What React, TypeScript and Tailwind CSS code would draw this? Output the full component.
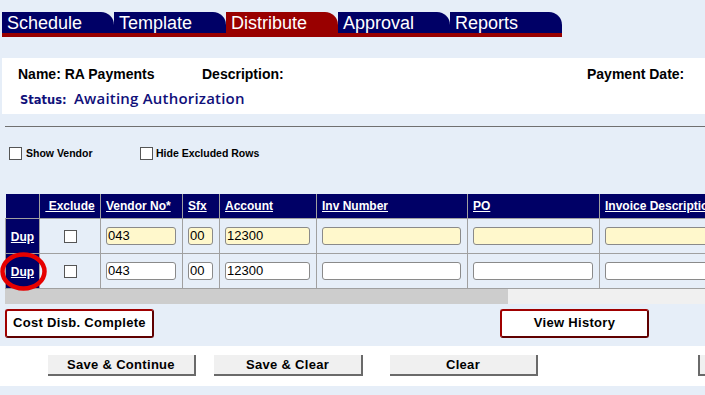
import React from "react";

const tabs = ["Schedule", "Template", "Distribute", "Approval", "Reports"];

const columns = [
  { label: "", w: 34 },
  { label: "\u00a0Exclude", w: 61, center: true },
  { label: "Vendor No*", w: 82 },
  { label: "Sfx", w: 37 },
  { label: "Account", w: 97 },
  { label: "Inv Number", w: 151 },
  { label: "PO", w: 132 },
  { label: "Invoice Description", w: 180 },
  { label: "Amount", w: 100 },
];

const inputWidths = [70, 25, 85, 139, 120, 168, 88];

function Checkbox() {
  return <span className="inline-block w-[13px] h-[13px] border border-[#555] bg-white shrink-0" />;
}

function Row({ yellow }: { yellow: boolean }) {
  const values = ["043", "00", "12300", "", "", "", ""];
  return (
    <tr>
      <td className="h-[35px] bg-[#000066] border border-[#a0a0a0] text-center align-middle">
        <a className="text-white font-bold underline text-[12px]">Dup</a>
      </td>
      <td className="border border-[#a0a0a0] text-center align-middle">
        <span className="inline-flex align-middle">
          <Checkbox />
        </span>
      </td>
      {values.map((v, i) => (
        <td key={i} className="border border-[#a0a0a0] pl-[5px] align-middle">
          <input
            readOnly
            value={v}
            style={{ width: inputWidths[i] }}
            className={`block h-[18px] rounded-[3px] border border-[#8a8a8a] px-[1px] text-[13px] text-black font-['Liberation_Sans',sans-serif] outline-none ${
              yellow ? "bg-[#fff8cc]" : "bg-white"
            }`}
          />
        </td>
      ))}
    </tr>
  );
}

export default function App() {
  return (
    <div className="w-[705px] h-[395px] overflow-hidden bg-[#e6eef8] font-['Liberation_Sans',Arial,sans-serif] text-black">
      {/* Tabs */}
      <div className="pt-[12px] pl-[2px]">
        <div className="flex">
          {tabs.map((t) => (
            <div
              key={t}
              className={`w-[112px] h-[21px] rounded-tr-[13px] pl-[5px] text-[18px] leading-[22px] text-white ${
                t === "Distribute" ? "bg-[#990000]" : "bg-[#000066]"
              }`}
            >
              {t}
            </div>
          ))}
        </div>
        <div className="w-[560px] h-[4px] bg-[#990000]" />
      </div>

      {/* Header */}
      <div className="ml-[2px] mt-[21px] h-[56px] bg-white pt-[8px] pl-[16px]">
        <div className="flex text-[14px] leading-[16px] font-bold">
          <span className="w-[184px]">Name: RA Payments</span>
          <span className="w-[385px]">Description:</span>
          <span>Payment Date:</span>
        </div>
        <div className="mt-[6px] flex items-baseline pl-[2px] text-[#10107a] leading-[20px]">
          <span className="w-[54px] text-[11.5px] font-bold font-['DejaVu_Sans',Verdana,sans-serif]">Status:</span>
          <span className="text-[15px] font-semibold font-['Open_Sans',sans-serif] tracking-[0.2px]">Awaiting Authorization</span>
        </div>
      </div>

      <div className="ml-[5px] mt-[12px] h-px bg-[#707070]" />

      {/* Options */}
      <div className="mt-[20px] flex items-center pl-[9px] text-[10.5px] font-bold h-[13px]">
        <Checkbox />
        <span className="ml-[4px] w-[114px]">Show Vendor</span>
        <Checkbox />
        <span className="ml-[3px]">Hide Excluded Rows</span>
      </div>

      {/* Grid */}
      <div className="relative ml-[5px] mt-[34px]">
        <div className="w-[700px] overflow-hidden">
          <table className="table-fixed border-collapse w-[874px]">
            <colgroup>
              {columns.map((c, i) => (
                <col key={i} style={{ width: c.w }} />
              ))}
            </colgroup>
            <thead>
              <tr className="bg-[#000066] h-[24px]">
                {columns.map((c, i) => (
                  <th
                    key={i}
                    className={`border-x border-b border-[#a0a0a0] first:border-l-0 text-white text-[12px] font-bold underline whitespace-nowrap overflow-hidden ${
                      c.center ? "text-center" : "text-left pl-[5px]"
                    }`}
                  >
                    {c.label}
                  </th>
                ))}
              </tr>
            </thead>
            <tbody>
              <Row yellow />
              <Row yellow={false} />
            </tbody>
          </table>
          <div className="h-[15px] bg-[#f0f0f0]">
            <div className="w-[503px] h-full bg-[#cdcdcd]" />
          </div>
        </div>
        {/* red annotation ring */}
        <svg className="absolute left-[-5px] top-[58px]" width="47" height="39" viewBox="0 0 47 39">
          <ellipse cx="23.5" cy="19.5" rx="21" ry="17" fill="none" stroke="#e60000" strokeWidth="4.5" />
        </svg>
      </div>

      {/* Action buttons */}
      <div className="mt-[5px] flex pl-[5px] text-[13px] font-bold tracking-[0.3px]">
        <button className="shrink-0 w-[149px] h-[29px] rounded-[3px] border-2 border-[#a00000] border-r-[#600000] border-b-[#600000] bg-white">
          Cost Disb. Complete
        </button>
        <button className="shrink-0 ml-[346px] w-[149px] h-[29px] rounded-[3px] border-2 border-[#a00000] border-r-[#600000] border-b-[#600000] bg-white">
          View History
        </button>
      </div>

      <div className="mt-[8px] h-[40px] bg-white pt-[9px] flex overflow-hidden text-[13px] font-bold tracking-[0.3px] whitespace-nowrap">
        <button className="shrink-0 ml-[48px] w-[148px] h-[21px] bg-[#f0f0f0] border-r-2 border-b-2 border-[#6a6a6a]">
          Save &amp; Continue
        </button>
        <button className="shrink-0 ml-[18px] w-[149px] h-[21px] bg-[#f0f0f0] border-r-2 border-b-2 border-[#6a6a6a]">
          Save &amp; Clear
        </button>
        <button className="shrink-0 ml-[27px] w-[148px] h-[21px] bg-[#f0f0f0] border-r-2 border-b-2 border-[#6a6a6a]">
          Clear
        </button>
        <button className="shrink-0 ml-[160px] w-[148px] h-[21px] bg-[#f0f0f0] border-l-2 border-r-2 border-b-2 border-[#6a6a6a]" />
      </div>
    </div>
  );
}
